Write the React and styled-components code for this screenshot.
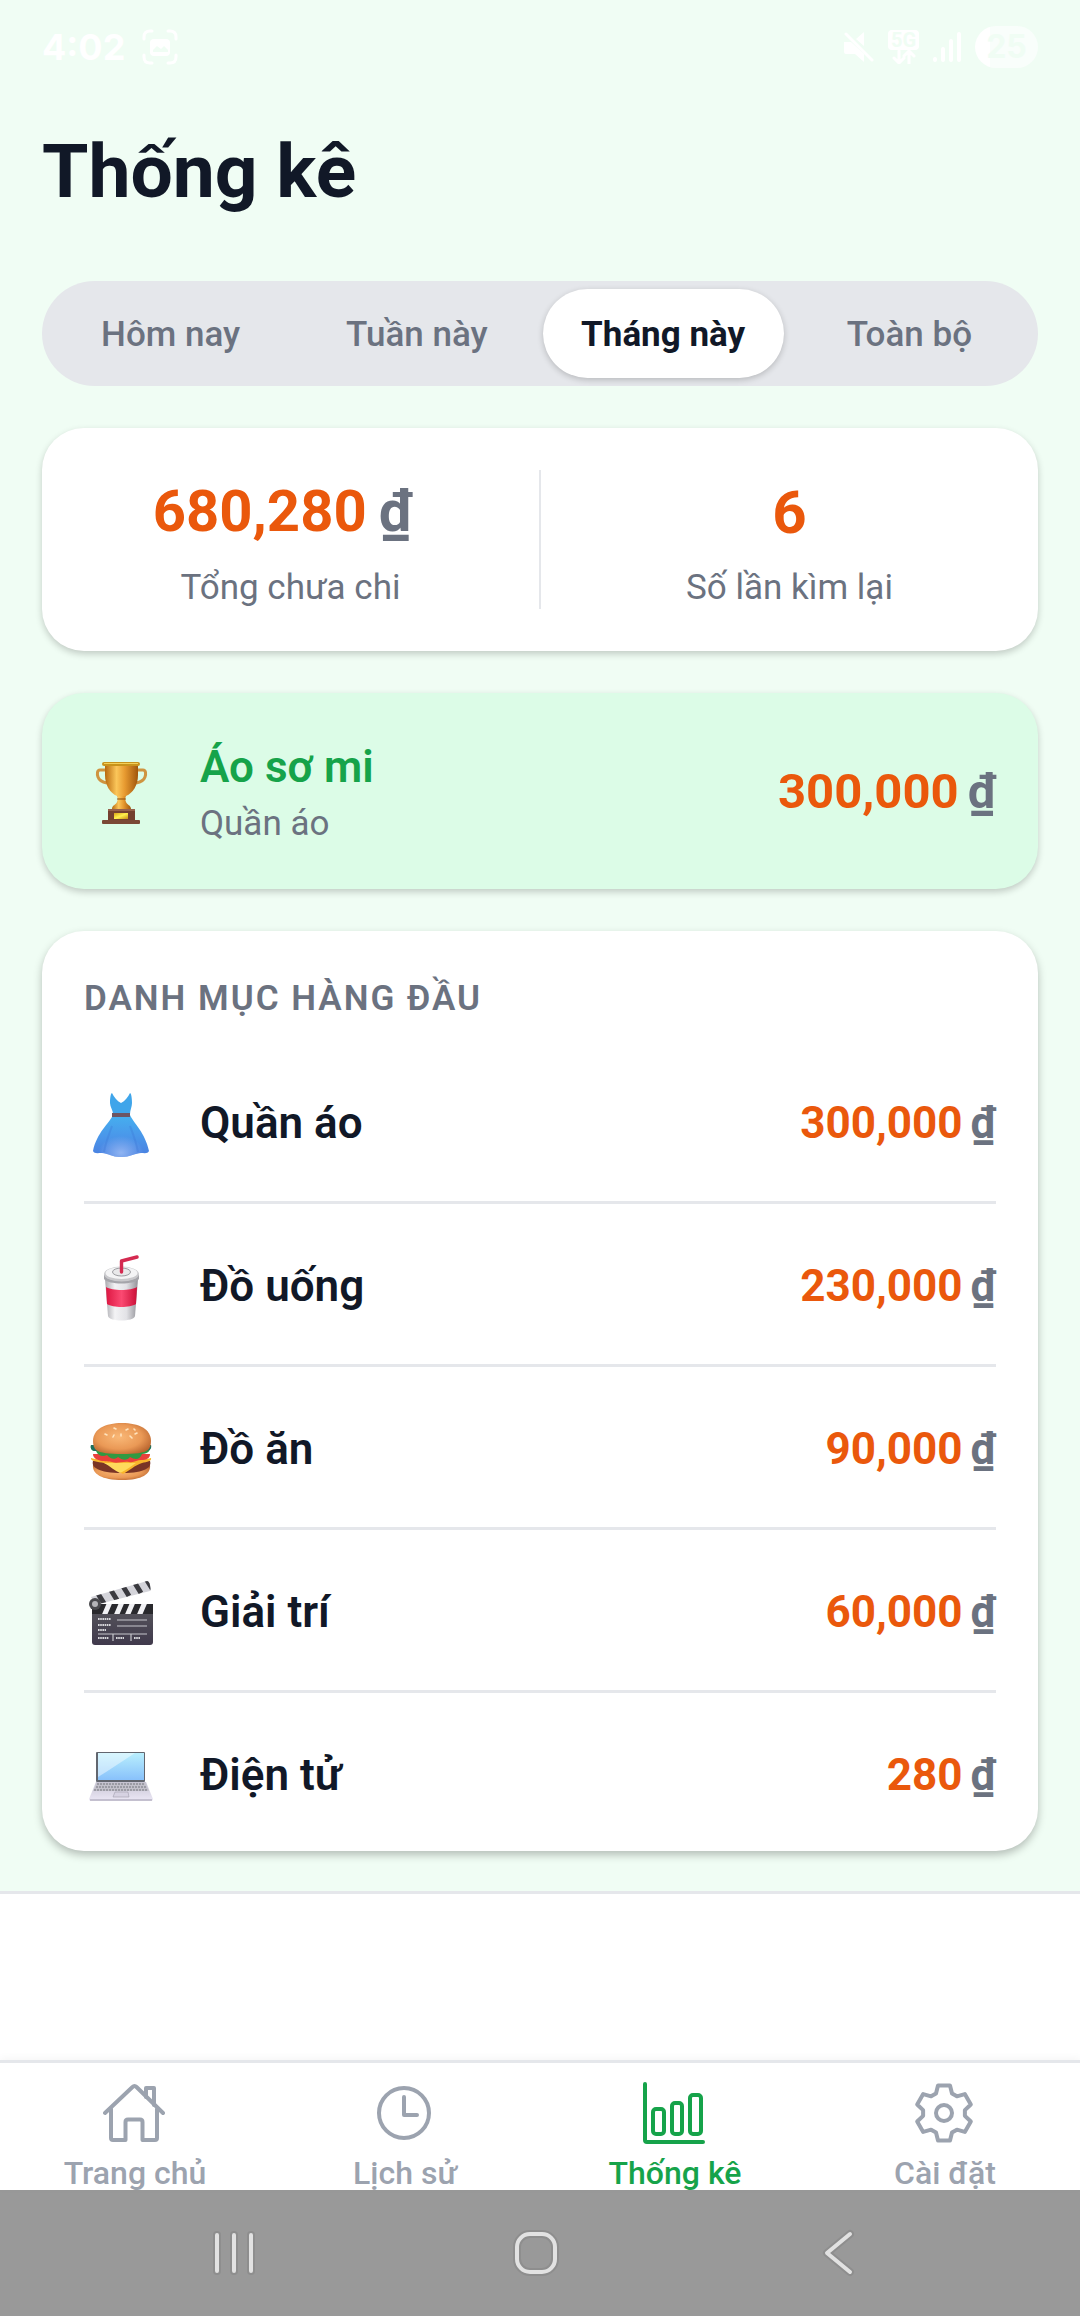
import React, { useState } from "react";
import styled, { createGlobalStyle } from "styled-components";

const colors = {
  mint: "#f0fdf4",
  mintCard: "#dcfce7",
  green: "#16a34a",
  orange: "#ea580c",
  ink: "#111827",
  gray: "#6b7280",
  lightGray: "#9ca3af",
  line: "#e5e7eb",
};

const periods = ["Hôm nay", "Tuần này", "Tháng này", "Toàn bộ"];

// one tooth of the settings gear, turned six times around the centre
const tooth = [
  [-8, -19.5],
  [-6, -27.5],
  [6, -27.5],
  [8, -19.5],
];
const gearPath =
  "M" +
  [0, 1, 2, 3, 4, 5]
    .flatMap((i) => {
      const a = (i * Math.PI) / 3;
      return tooth.map(
        ([x, y]) =>
          `${(31 + x * Math.cos(a) - y * Math.sin(a)).toFixed(2)} ${(
            32 +
            x * Math.sin(a) +
            y * Math.cos(a)
          ).toFixed(2)}`
      );
    })
    .join("L") +
  "Z";

const Trophy = () => (
  <Emoji viewBox="0 0 74 74" aria-hidden="true">
    <defs>
      <linearGradient id="cup" x1="0" x2="1">
        <stop offset="0" stopColor="#b8690f" />
        <stop offset="0.35" stopColor="#fbc65a" />
        <stop offset="0.6" stopColor="#e79a30" />
        <stop offset="1" stopColor="#a0560c" />
      </linearGradient>
      <linearGradient id="plaque" x1="0" x2="1" y2="1">
        <stop offset="0" stopColor="#d9a417" />
        <stop offset="0.5" stopColor="#fff04d" />
        <stop offset="1" stopColor="#c98f12" />
      </linearGradient>
    </defs>
    <path
      d="M22 16h-6c-3 0-3 4-2 7 1 3 4 5 9 6M53 16h6c3 0 3 4 2 7-1 3-4 5-9 6"
      fill="none"
      stroke="#cf9440"
      strokeWidth="3"
    />
    <path
      d="M21 11h33v10c0 10-5 18-12 21h-9c-7-3-12-11-12-21z"
      fill="url(#cup)"
    />
    <rect x="18" y="8" width="38" height="4" rx="2" fill="#c8931c" />
    <rect x="20" y="9" width="34" height="1" fill="#f2cf58" />
    <path d="M33 42h9l-1 3 1 3c1 3 5 3 5 7H28c0-4 4-4 5-7l1-3z" fill="url(#cup)" />
    <path d="M33 45h9" stroke="#8a4a0c" />
    <rect x="24" y="55" width="27" height="12" fill="#74402f" />
    <rect x="24" y="55" width="27" height="2" fill="#96604a" />
    <rect x="18" y="66" width="38" height="4" rx="1" fill="#7b4836" />
    <rect x="30" y="59" width="14" height="6" fill="url(#plaque)" />
  </Emoji>
);

const Dress = () => (
  <Emoji viewBox="0 0 74 74" aria-hidden="true">
    <defs>
      <linearGradient id="skirt" x2="0" y2="1">
        <stop offset="0" stopColor="#45b0ef" />
        <stop offset="0.5" stopColor="#4a97ea" />
        <stop offset="1" stopColor="#4a7fe0" />
      </linearGradient>
      <radialGradient id="fold" cx="0.5" cy="0.9" r="0.4">
        <stop offset="0" stopColor="#8fb4f2" />
        <stop offset="1" stopColor="#8fb4f2" stopOpacity="0" />
      </radialGradient>
    </defs>
    <path
      d="M28 7c2 4 5 8 9 10 4-2 7-6 9-10 1 0 2 4 2 10 0 4-2 7-2 11H29c0-4-3-7-3-11 0-6 1-10 2-10z"
      fill="#3fa5ea"
    />
    <path
      d="M29 29h17c4 9 15 17 19 36-1 3-5 2-8 2-5 0-11 4-20 4s-14-4-19-4c-4 0-8 1-9-2 4-19 16-27 20-36z"
      fill="url(#skirt)"
    />
    <path
      d="M9 65c4-19 16-27 20-36h17c4 9 15 17 19 36-1 3-5 2-8 2-5 0-11 4-20 4s-14-4-19-4z"
      fill="url(#fold)"
    />
    <path
      d="M28 40c-3 9-6 15-8 26M46 40c3 8 6 15 8 26"
      fill="none"
      stroke="#3b78d8"
      strokeOpacity="0.35"
      strokeWidth="2"
    />
    <rect x="28" y="27" width="18" height="4" fill="#6d5563" />
  </Emoji>
);

const Drink = () => (
  <Emoji viewBox="0 0 74 74" aria-hidden="true">
    <defs>
      <linearGradient id="paper" x1="0" x2="1">
        <stop offset="0" stopColor="#a9a9ae" />
        <stop offset="0.3" stopColor="#f3f3f5" />
        <stop offset="0.65" stopColor="#e2e2e6" />
        <stop offset="1" stopColor="#929298" />
      </linearGradient>
      <linearGradient id="band" x1="0" x2="1">
        <stop offset="0" stopColor="#dd1742" />
        <stop offset="0.5" stopColor="#fb4a72" />
        <stop offset="1" stopColor="#cb1038" />
      </linearGradient>
    </defs>
    <path d="M21 30h33l-3 37c-1 6-26 6-27 0z" fill="url(#paper)" />
    <path d="M22 38c6 4 25 4 31 0l-1 17c-6 4-23 4-29 0z" fill="url(#band)" />
    <path d="M20 26h35v4c-4 6-31 6-35 0z" fill="#a5a5aa" />
    <ellipse cx="37.500" cy="25" rx="17.500" ry="7.500" fill="#c9c9cc" />
    <ellipse cx="37.500" cy="24" rx="16" ry="6" fill="#f4f4f5" />
    <ellipse cx="37.500" cy="23" rx="9" ry="4" fill="#e9e9ea" stroke="#9c9ca0" />
    <path
      d="M37.500 23V12L53 8"
      fill="none"
      stroke="#d42a50"
      strokeWidth="3.400"
      strokeLinejoin="round"
      strokeLinecap="round"
    />
  </Emoji>
);

const Burger = () => (
  <Emoji viewBox="0 0 74 74" aria-hidden="true">
    <defs>
      <radialGradient id="bun" cx="0.45" cy="0.45" r="0.65">
        <stop offset="0" stopColor="#f9b877" />
        <stop offset="0.6" stopColor="#ea9956" />
        <stop offset="1" stopColor="#b5602b" />
      </radialGradient>
    </defs>
    <path d="M9 53h57c1 9-8 15-28 15S8 62 9 53z" fill="url(#bun)" />
    <path d="M9 49h57c2 6-4 12-28 12S7 55 9 49z" fill="#7a3426" />
    <path
      d="M7 46c8 3 52 3 60 0 1 3-4 4-9 5-7 2-13 8-19 11-6-3-12-9-19-11-6-1-14-2-13-5z"
      fill="#f9b52c"
    />
    <path d="M20 51h32c-5 3-9 7-16 10-5-2-10-7-16-10z" fill="#ffdb5c" />
    <path
      d="M9 42h57c0 4-3 6-9 6-4 0-7 3-12 2-6-1-12 2-17 0-5-1-19 0-19-8z"
      fill="#e9403b"
    />
    <path
      d="M7 33c-1 4 1 6 5 6 2 5 7 6 11 4 3 4 8 5 11 2 4 3 9 4 12 0 5 3 10 3 12-3 6 0 9-4 9-9z"
      fill="#2f9a42"
    />
    <path d="M7 33c-1 4 1 6 5 6h49c5 0 7-3 6-6z" fill="#1e6f5d" />
    <path
      d="M9 29c0-12 12-18 29-18s29 6 29 18c0 4-1 7-3 9-4 3-13 4-26 4s-22-1-26-4c-2-2-3-5-3-9z"
      fill="url(#bun)"
    />
    <path
      d="M30 16l2 1M42 18l2-1M21 22l2 1M29 25l1-2M37 22v2M46 24l2 2M51 22l2-1M50 17l1 1"
      stroke="#ffe3bd"
      strokeWidth="1.600"
      strokeLinecap="round"
    />
  </Emoji>
);

const Clapper = () => (
  <Emoji viewBox="0 0 74 74" aria-hidden="true">
    <defs>
      <linearGradient id="slate" x2="0" y2="1">
        <stop offset="0" stopColor="#58585d" />
        <stop offset="1" stopColor="#40394c" />
      </linearGradient>
      <clipPath id="arm">
        <path d="M7 22L63 6q2 0 3 4t0 6L11 30z" />
      </clipPath>
      <clipPath id="strip">
        <path d="M8 29h61v10H8z" />
      </clipPath>
    </defs>
    <g clipPath="url(#arm)">
      <path d="M0 0h74v32H0z" fill="#d4d4da" />
      <path
        d="M13 17l8 13M25 12l8 13M37 8l8 13M49 5l8 13M61 2l8 13"
        stroke="#3a3a3f"
        strokeWidth="5"
      />
    </g>
    <rect x="8" y="29" width="61" height="41" rx="3" fill="url(#slate)" />
    <g clipPath="url(#strip)">
      <path d="M8 29h61v10H8z" fill="#29292d" />
      <path
        d="M26 27l-6 14M38 27l-6 14M49 27l-6 14M61 27l-6 14"
        stroke="#f1f1f4"
        strokeWidth="5"
      />
    </g>
    <path
      d="M33 45h30M33 51h30M14 59h49M29 59v7M47 59v7"
      stroke="#c5c5cb"
      strokeWidth="1.200"
    />
    <path
      d="M14 44h13M14 50h13M14 55h8M14 63h11M32 63h8M50 63h6"
      stroke="#d6d6da"
      strokeWidth="2.200"
      strokeDasharray="1.600 0.600"
    />
    <circle cx="11" cy="29" r="6" fill="#4a4a4e" />
    <circle cx="11" cy="29" r="3" fill="#b5b5b9" />
  </Emoji>
);

const Laptop = () => (
  <Emoji viewBox="0 0 74 74" aria-hidden="true">
    <defs>
      <linearGradient id="screen" x2="0" y2="1">
        <stop offset="0" stopColor="#b9effd" />
        <stop offset="1" stopColor="#88c1fb" />
      </linearGradient>
      <linearGradient id="shell" x2="0" y2="1">
        <stop offset="0" stopColor="#c6c3d2" />
        <stop offset="1" stopColor="#ece8f6" />
      </linearGradient>
    </defs>
    <rect x="12" y="14" width="49" height="30" rx="1" fill="#62666f" />
    <rect x="14" y="15" width="46" height="27" fill="url(#screen)" />
    <path d="M14 15h37L22 34l-8 5z" fill="#fff" fillOpacity="0.45" />
    <path d="M12 44h50l7 17c0 1-1 2-2 2H7c-1 0-2-1-2-2z" fill="url(#shell)" />
    <path d="M13 45h48l4 8H9z" fill="#c3c1cb" />
    <path
      d="M13 46h48M12 49h51M10 52h54"
      stroke="#8f8e98"
      strokeWidth="1.400"
      strokeDasharray="2 1"
    />
    <path d="M31 54h13l1 5H29z" fill="#d6d2e2" stroke="#a19eac" strokeWidth="0.600" />
    <path d="M6 62h62" stroke="#9d99aa" />
  </Emoji>
);

const categories = [
  { name: "Quần áo", amount: "300,000", Icon: Dress },
  { name: "Đồ uống", amount: "230,000", Icon: Drink },
  { name: "Đồ ăn", amount: "90,000", Icon: Burger },
  { name: "Giải trí", amount: "60,000", Icon: Clapper },
  { name: "Điện tử", amount: "280", Icon: Laptop },
];

const navItems = [
  {
    label: "Trang chủ",
    icon: (
      <>
        <path d="M2 32L29.500 6q2-2 4 0L60 32" />
        <path d="M43 16V7h8v17" />
        <path d="M8 28v29q0 2 2 2h12.500V41q0-2.500 2.500-2.500h12q2.500 0 2.500 2.500v18H52q2 0 2-2V28" />
      </>
    ),
  },
  {
    label: "Lịch sử",
    icon: (
      <>
        <circle cx="31" cy="32" r="25" />
        <path d="M31 16v18h13" />
      </>
    ),
  },
  {
    label: "Thống kê",
    active: true,
    icon: (
      <>
        <path d="M2 3v56q0 2 2 2h56" />
        <rect x="10" y="28" width="11" height="25" rx="3" />
        <rect x="29" y="22" width="10" height="31" rx="3" />
        <rect x="47" y="14" width="11" height="39" rx="3" />
      </>
    ),
  },
  {
    label: "Cài đặt",
    icon: (
      <>
        <path d={gearPath} />
        <circle cx="31" cy="32" r="8" />
      </>
    ),
  },
];

const Money = ({ value, size, gap = 8 }) => (
  <Amount $size={size} $gap={gap}>
    {value}
    <Currency>₫</Currency>
  </Amount>
);

const StatusBar = () => (
  <Status>
    <StatusGroup>
      <Clock>4:02</Clock>
      <svg width="36" height="36" viewBox="0 0 36 36" fill="none" aria-hidden="true">
        <path
          d="M2 10V8q0-6 6-6h2M26 2h2q6 0 6 6v2M34 26v2q0 6-6 6h-2M10 34H8q-6 0-6-6v-2"
          stroke="#fff"
          strokeWidth="3"
          strokeLinecap="round"
        />
        <rect x="8" y="10" width="20" height="17" rx="4" fill="#fff" />
        <path d="M11 23v-2l4-4 4 3 3-3 4 4v2z" fill={colors.mint} />
      </svg>
    </StatusGroup>
    <StatusGroup>
      <svg width="32" height="32" viewBox="0 0 32 32" aria-hidden="true">
        <path d="M22 1v14L14 8zM2 11h7l13 12v8l-9-8H4q-2 0-2-2z" fill="#fff" />
        <path d="M4 3l26 26" stroke="#fff" strokeWidth="3" strokeLinecap="round" />
      </svg>
      <Network>
        <NetworkTag>5G</NetworkTag>
        <svg width="24" height="14" viewBox="0 0 24 14" fill="none" aria-hidden="true">
          <path
            d="M7 1v12M2 8l5 5 5-5M17 14V2M12 6l5-5 5 5"
            stroke="#fff"
            strokeWidth="3"
            strokeLinecap="round"
          />
        </svg>
      </Network>
      <svg width="28" height="32" viewBox="0 0 28 32" aria-hidden="true">
        <path
          d="M2 28v1M10 18v11M18 10v19M26 3v26"
          stroke="#fff"
          strokeWidth="4"
          strokeLinecap="round"
        />
      </svg>
      <Battery>25</Battery>
    </StatusGroup>
  </Status>
);

const App = () => {
  const [period, setPeriod] = useState("Tháng này");

  return (
    <Page>
      <GlobalStyle />
      <Screen>
        <StatusBar />
        <Title>Thống kê</Title>
        <Tabs>
          {periods.map((name) => (
            <Tab
              key={name}
              type="button"
              $active={name === period}
              aria-pressed={name === period}
              onClick={() => setPeriod(name)}
            >
              {name}
            </Tab>
          ))}
        </Tabs>
        <Summary>
          <Stat>
            <StatMoney>
              <Money value="680,280" size={58} gap={12} />
            </StatMoney>
            <StatLabel>Tổng chưa chi</StatLabel>
          </Stat>
          <Divider />
          <Stat>
            <StatValue>6</StatValue>
            <StatLabel>Số lần kìm lại</StatLabel>
          </Stat>
        </Summary>
        <Highlight>
          <Trophy />
          <HighlightText>
            <HighlightName>Áo sơ mi</HighlightName>
            <HighlightCategory>Quần áo</HighlightCategory>
          </HighlightText>
          <Money value="300,000" size={49} gap={9} />
        </Highlight>
        <CategoryCard>
          <Heading>DANH MỤC HÀNG ĐẦU</Heading>
          <List>
            {categories.map(({ name, amount, Icon }) => (
              <Row key={name}>
                <Icon />
                <RowName>{name}</RowName>
                <Money value={amount} size={44} />
              </Row>
            ))}
          </List>
        </CategoryCard>
      </Screen>
      <Spacer />
      <BottomNav>
        {navItems.map(({ label, icon, active }) => (
          <NavLink key={label} href="#" $active={active}>
            <NavIcon viewBox="0 0 64 64" aria-hidden="true">
              {icon}
            </NavIcon>
            {label}
          </NavLink>
        ))}
      </BottomNav>
      <SystemBar>
        <SystemButton type="button" aria-label="Recents">
          <SystemIcon viewBox="0 0 48 48">
            <path d="M7 6v36M24 6v36M41 6v36" />
            <path d="M7 6v36M24 6v36M41 6v36" />
          </SystemIcon>
        </SystemButton>
        <SystemButton type="button" aria-label="Home">
          <SystemIcon viewBox="0 0 48 48">
            <rect x="5" y="5" width="38" height="38" rx="13" />
            <rect x="5" y="5" width="38" height="38" rx="13" />
          </SystemIcon>
        </SystemButton>
        <SystemButton type="button" aria-label="Back">
          <SystemIcon viewBox="0 0 48 48">
            <path d="M35 5L12 24l23 19" />
            <path d="M35 5L12 24l23 19" />
          </SystemIcon>
        </SystemButton>
      </SystemBar>
    </Page>
  );
};

const GlobalStyle = createGlobalStyle`
  * {
    box-sizing: border-box;
  }
  body {
    margin: 0;
    background: #fff;
    color: ${colors.ink};
    font-family: Roboto, "Noto Sans", sans-serif;
  }
  button {
    border: 0;
    padding: 0;
    background: none;
    font-family: inherit;
    cursor: pointer;
  }
`;
const Page = styled.div`
  display: flex;
  flex-direction: column;
  min-height: 100vh;
`;
const Screen = styled.main`
  display: flex;
  flex-direction: column;
  gap: 42px;
  padding: 0 42px 40px;
  background: ${colors.mint};
`;
const Status = styled.div`
  display: flex;
  justify-content: space-between;
  align-items: center;
  height: 94px;
  color: #fff;
`;
const StatusGroup = styled.div`
  display: flex;
  align-items: center;
  gap: 14px;
`;
const Clock = styled.span`
  width: 86px;
  font-family: Inter, sans-serif;
  font-size: 36px;
  font-weight: 700;
`;
const Network = styled.span`
  display: flex;
  flex-direction: column;
  align-items: center;
`;
const NetworkTag = styled.span`
  width: 31px;
  border-radius: 4px;
  background: #fff;
  color: ${colors.mint};
  font-size: 20px;
  font-weight: 700;
  line-height: 20px;
  text-align: center;
`;
const Battery = styled.span`
  width: 63px;
  height: 42px;
  border-radius: 21px;
  background: linear-gradient(90deg, #fff 15px, #f9fefb 15px);
  color: ${colors.mint};
  font-family: Inter, sans-serif;
  font-size: 32px;
  font-weight: 700;
  line-height: 42px;
  text-align: center;
`;
const Title = styled.h1`
  margin: -9px 0 24px;
  font-size: 75px;
  font-weight: 700;
  line-height: 88px;
`;
const Tabs = styled.div`
  display: flex;
  gap: 5px;
  padding: 8px;
  border-radius: 53px;
  background: ${colors.line};
`;
const Tab = styled.button`
  flex: 1;
  padding-top: 3px;
  border-radius: 45px;
  background: ${({ $active }) => ($active ? "#fff" : "transparent")};
  box-shadow: ${({ $active }) =>
    $active ? "0 2px 6px rgba(0, 0, 0, 0.2)" : "none"};
  color: ${({ $active }) => ($active ? colors.ink : colors.gray)};
  font-size: 35px;
  font-weight: ${({ $active }) => ($active ? 700 : 500)};
  line-height: 86px;
`;
const Card = styled.section`
  padding: 42px;
  border-radius: 42px;
  background: #fff;
  box-shadow: 0 3px 7px rgba(0, 0, 0, 0.2);
`;
const Summary = styled(Card)`
  display: flex;
  padding: 42px 0;
`;
const Stat = styled.div`
  flex: 1;
  padding-top: 8px;
  text-align: center;
`;
const StatValue = styled.div`
  margin-bottom: 19px;
  color: ${colors.orange};
  font-size: 60px;
  font-weight: 700;
  line-height: 70px;
`;
const StatMoney = styled(StatValue)`
  padding: 0 16px 4px 0;
  line-height: 66px;
`;
const StatLabel = styled.div`
  color: ${colors.gray};
  font-size: 35px;
  line-height: 42px;
`;
const Divider = styled.div`
  width: 2px;
  background: ${colors.line};
`;
const Amount = styled.div`
  display: flex;
  justify-content: center;
  gap: ${({ $gap }) => $gap}px;
  color: ${colors.orange};
  font-size: ${({ $size }) => $size}px;
  font-weight: 700;
  white-space: nowrap;
`;
const Currency = styled.span`
  color: ${colors.gray};
`;
const Highlight = styled(Card)`
  display: flex;
  align-items: center;
  background: ${colors.mintCard};
`;
const HighlightText = styled.div`
  flex: 1;
`;
const HighlightName = styled.div`
  color: ${colors.green};
  font-size: 44px;
  font-weight: 600;
  line-height: 64px;
`;
const HighlightCategory = styled.div`
  padding-top: 2px;
  color: ${colors.gray};
  font-size: 35px;
  line-height: 46px;
`;
const CategoryCard = styled(Card)`
  padding-bottom: 39px;
  box-shadow: 0 4px 9px rgba(0, 0, 0, 0.25);
`;
const Heading = styled.h2`
  margin: 0 0 16px;
  color: ${colors.gray};
  font-size: 35px;
  font-weight: 600;
  letter-spacing: 2px;
  line-height: 52px;
`;
const List = styled.ul`
  margin: 0;
  padding: 0;
  list-style: none;
`;
const Row = styled.li`
  display: flex;
  align-items: center;
  padding: 45px 0 41px;
  border-bottom: 3px solid ${colors.line};

  &:last-child {
    padding-bottom: 0;
    border-bottom: 0;
  }
`;
const RowName = styled.span`
  flex: 1;
  font-size: 44px;
  font-weight: 600;
`;
const Emoji = styled.svg`
  flex: none;
  width: 74px;
  height: 74px;
  margin-right: 42px;
`;
const Spacer = styled.div`
  flex: 1;
  border-top: 3px solid ${colors.line};
`;
const BottomNav = styled.nav`
  display: flex;
  padding-top: 18px;
  border-top: 3px solid ${colors.line};
  background: #fff;
  box-shadow: 0 -2px 8px rgba(0, 0, 0, 0.04);
`;
const NavLink = styled.a`
  flex: 1;
  display: flex;
  flex-direction: column;
  align-items: center;
  gap: 11px;
  color: ${({ $active }) => ($active ? colors.green : colors.lightGray)};
  font-size: 32px;
  font-weight: 500;
  line-height: 34px;
  text-decoration: none;
`;
const NavIcon = styled.svg`
  width: 64px;
  height: 64px;
  fill: none;
  stroke: currentColor;
  stroke-width: 4;
  stroke-linecap: round;
  stroke-linejoin: round;
`;
const SystemBar = styled.div`
  position: relative;
  display: flex;
  justify-content: space-around;
  align-items: center;
  height: 126px;
  padding: 0 90px 0 83px;
  background: rgba(0, 0, 0, 0.4);
`;
const SystemButton = styled.button`
  display: flex;
`;
const SystemIcon = styled.svg`
  width: 48px;
  height: 48px;
  overflow: visible;
  fill: none;
  stroke: #e2e2e2;
  stroke-width: 4;
  stroke-linecap: round;
  stroke-linejoin: round;

  /* the first shape is the dark halo behind the second */
  & > :first-child {
    stroke: #8e8e8e;
    stroke-width: 8;
  }
`;

export default App;
